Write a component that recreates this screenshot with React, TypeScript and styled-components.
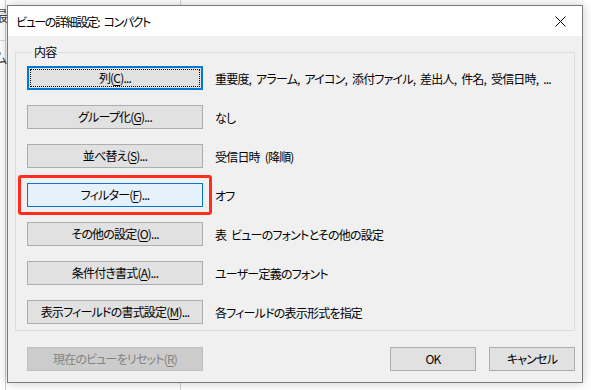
import React from 'react';
import styled, { createGlobalStyle } from 'styled-components';

const GlobalStyle = createGlobalStyle`
  html, body {
    margin: 0;
    padding: 0;
    background: #ffffff;
  }
  body {
    width: 591px;
    height: 390px;
    overflow: hidden;
    position: relative;
    font-family: "Noto Sans CJK JP", "Noto Sans", sans-serif;
    font-size: 12px;
    font-feature-settings: "palt";
    letter-spacing: -0.8px;
    color: #000;
  }
`;

const Desktop = styled.div`
  position: relative;
  width: 591px;
  height: 390px;
  overflow: hidden;
  background: #ffffff;
`;

const BehindWindow = styled.div`
  position: absolute;
  left: -20px;
  top: 0;
  width: 200px;
  height: 390px;
  border-right: 1px solid #d4d4d4;
  background: #ffffff;
`;

const BehindEdge = styled.div`
  position: absolute;
  left: 25px;
  top: 0;
  width: 1px;
  height: 390px;
  background: #cfcfcf;
`;

const BehindLabel = styled.div<{ top: number; color?: string }>`
  position: absolute;
  left: 14px;
  top: ${(p) => p.top}px;
  font-size: 14px;
  line-height: 16px;
  color: ${(p) => p.color || '#444'};
`;

const BehindRule = styled.div<{ top: number }>`
  position: absolute;
  left: 0;
  top: ${(p) => p.top}px;
  width: 26px;
  height: 1px;
  background: #dadada;
`;

const Dialog = styled.div`
  position: absolute;
  left: 7px;
  top: 5px;
  width: 574px;
  height: 376px;
  border: 1px solid #7a7a7a;
  background: #f0f0f0;
  box-shadow: 0 0 10px rgba(0, 0, 0, 0.22);
  display: flex;
  flex-direction: column;
`;

const TitleBar = styled.div`
  height: 30px;
  background: #ffffff;
  display: flex;
  align-items: center;
  justify-content: space-between;
  padding-left: 8px;
  flex-shrink: 0;
`;

const Title = styled.span`
  font-size: 12px;
  letter-spacing: -1.4px;
  word-spacing: 3px;
  color: #000;
`;

const CloseButton = styled.div`
  width: 46px;
  height: 30px;
  display: flex;
  align-items: center;
  justify-content: center;
  margin-right: -1px;
`;

const Body = styled.div`
  flex: 1;
  display: flex;
  flex-direction: column;
  padding: 8px 7px 9px 7px;
`;

const Group = styled.fieldset`
  margin: 0;
  padding: 6px 10px 6px 11px;
  border: 1px solid #dcdcdc;
  display: flex;
  flex-direction: column;
  gap: 15px;
  min-width: 0;
`;

const Legend = styled.legend`
  padding: 0 2px;
  margin-left: 5px;
  font-size: 12px;
  line-height: 16px;
`;

const Row = styled.div`
  display: flex;
  align-items: center;
  gap: 12px;
`;

const ButtonSlot = styled.div`
  position: relative;
  display: flex;
`;

const Highlight = styled.div`
  position: absolute;
  inset: -8px -9px;
  border: 3px solid #ff2d1f;
  border-radius: 3px;
  pointer-events: none;
`;

type Variant = 'normal' | 'default' | 'hover' | 'disabled';

const WinButton = styled.button<{ variant?: Variant; w: number }>`
  width: ${(p) => p.w}px;
  height: 24px;
  box-sizing: border-box;
  margin: 0;
  padding: 0;
  font-family: "Noto Sans CJK JP", "Noto Sans", sans-serif;
  font-size: 12px;
  font-feature-settings: "palt";
  letter-spacing: -0.8px;
  line-height: 16px;
  white-space: nowrap;
  position: relative;
  cursor: default;
  color: ${(p) => (p.variant === 'disabled' ? '#838383' : '#000')};
  background: ${(p) =>
    p.variant === 'hover' ? '#e5f1fb' : p.variant === 'disabled' ? '#cccccc' : '#e1e1e1'};
  border: ${(p) =>
    p.variant === 'default'
      ? '2px solid #0078d7'
      : p.variant === 'hover'
      ? '1px solid #0078d7'
      : p.variant === 'disabled'
      ? '1px solid #bfbfbf'
      : '1px solid #adadad'};

  u {
    text-decoration: underline;
    text-underline-offset: 2px;
  }
`;

const FocusRect = styled.span`
  position: absolute;
  inset: 1px;
  border: 1px dotted #000;
  pointer-events: none;
`;

const Description = styled.span`
  font-size: 12px;
  word-spacing: 3px;
  white-space: nowrap;
`;

const Footer = styled.div`
  display: flex;
  align-items: center;
  margin-top: 16px;
  padding-left: 12px;
`;

const FooterRight = styled.div`
  margin-left: auto;
  display: flex;
  gap: 13px;
`;

type Setting = {
  label: string;
  key: string;
  desc: string;
  variant?: Variant;
  highlight?: boolean;
};

const settings: Setting[] = [
  { label: '列', key: 'C', desc: '重要度, アラーム, アイコン, 添付ファイル, 差出人, 件名, 受信日時, ...', variant: 'default' },
  { label: 'グループ化', key: 'G', desc: 'なし' },
  { label: '並べ替え', key: 'S', desc: '受信日時 (降順)' },
  { label: 'フィルター', key: 'F', desc: 'オフ', variant: 'hover', highlight: true },
  { label: 'その他の設定', key: 'O', desc: '表 ビューのフォントとその他の設定' },
  { label: '条件付き書式', key: 'A', desc: 'ユーザー定義のフォント' },
  { label: '表示フィールドの書式設定', key: 'M', desc: '各フィールドの表示形式を指定' },
];

const CloseIcon = () => (
  <svg width="11" height="11" viewBox="0 0 11 11">
    <path d="M0.5 0.5 L10.5 10.5 M10.5 0.5 L0.5 10.5" stroke="#000" strokeWidth="1" fill="none" />
  </svg>
);

const App = () => (
  <>
    <GlobalStyle />
    <Desktop>
      <BehindWindow>
        <BehindEdge />
        <BehindLabel top={7}>最</BehindLabel>
        <BehindRule top={13} />
        <BehindRule top={40} />
        <BehindLabel top={49}>ム</BehindLabel>
      </BehindWindow>
      <Dialog>
        <TitleBar>
          <Title>ビューの詳細設定: コンパクト</Title>
          <CloseButton>
            <CloseIcon />
          </CloseButton>
        </TitleBar>
        <Body>
          <Group>
            <Legend>内容</Legend>
            {settings.map((s) => (
              <Row key={s.key}>
                <ButtonSlot>
                  <WinButton w={176} variant={s.variant}>
                    {s.label}(<u>{s.key}</u>)...
                    {s.variant === 'default' && <FocusRect />}
                  </WinButton>
                  {s.highlight && <Highlight />}
                </ButtonSlot>
                <Description>{s.desc}</Description>
              </Row>
            ))}
          </Group>
          <Footer>
            <WinButton w={176} variant="disabled">
              現在のビューをリセット(<u>R</u>)
            </WinButton>
            <FooterRight>
              <WinButton w={86}>OK</WinButton>
              <WinButton w={86}>キャンセル</WinButton>
            </FooterRight>
          </Footer>
        </Body>
      </Dialog>
    </Desktop>
  </>
);

export default App;
